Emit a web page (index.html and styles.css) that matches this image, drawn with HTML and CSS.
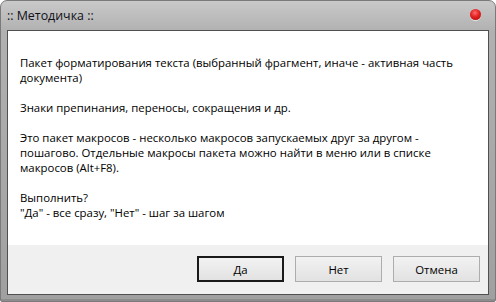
FILE: index.html
```html
<!DOCTYPE html>
<html>
<head>
<meta charset="utf-8">
<link rel="stylesheet" href="styles.css">
</head>
<body>
<div class="window">
  <div class="titlebar">
    <span class="title">:: Методичка ::</span>
    <span class="close"></span>
  </div>
  <div class="client">
    <div class="content">
      <p>Пакет форматирования текста (выбранный фрагмент, иначе - активная часть<br>документа)</p>
      <p>Знаки препинания, переносы, сокращения и др.</p>
      <p>Это пакет макросов - несколько макросов запускаемых друг за другом -<br>пошагово. Отдельные макросы пакета можно найти в меню или в списке<br>макросов (Alt+F8).</p>
      <p>Выполнить?<br>"Да" - все сразу, "Нет" - шаг за шагом</p>
    </div>
    <div class="buttons">
      <button class="btn default">Да</button>
      <button class="btn">Нет</button>
      <button class="btn">Отмена</button>
    </div>
  </div>
</div>
</body>
</html>
```

FILE: styles.css
```css
html, body { margin: 0; padding: 0; background: #fff; }
body { width: 496px; height: 302px; overflow: hidden; font-family: "Open Sans", "Noto Sans", sans-serif; }
.window {
  box-sizing: border-box;
  width: 496px; height: 302px;
  border-radius: 7px 7px 2px 2px;
  border: 1px solid #7a7a7a;
  background: linear-gradient(#c9c9c9 0px, #b1b1b1 30px, #a0a0a0 100%);
  display: flex; flex-direction: column;
  padding: 0 6px 6px 6px;
  box-shadow: inset 0 -2px 0 #8c8c8c;
}
.titlebar {
  height: 29px;
  display: flex; align-items: center; justify-content: space-between;
}
.title { font-size: 12.4px; color: #101018; }
.close {
  width: 11px; height: 11px; border-radius: 50%;
  background: radial-gradient(circle at 45% 35%, #ff6a6a 0, #e22020 45%, #b00808 100%);
  box-shadow: 0 1px 0 rgba(255,255,255,0.6);
  margin-right: 8px; margin-top: -2px;
}
.client {
  flex: 1;
  border: 1px solid #505050;
  background: #f0f0f0;
  display: flex; flex-direction: column;
}
.content {
  background: #fff;
  height: 214px;
  padding: 24px 0 0 12px;
  box-sizing: border-box;
  font-size: 11.4px;
  line-height: 15px;
  color: #000;
}
.content p { margin: 0 0 15px 0; white-space: nowrap; }
.buttons {
  flex: 1;
  display: flex; justify-content: flex-end; align-items: flex-start;
  gap: 11px;
  padding: 11px 8px 0 0;
}
.btn {
  width: 87px; height: 26px;
  font-family: inherit; font-size: 11.4px; color: #000;
  background: linear-gradient(#f2f2f2, #e2e2e2);
  border: 1px solid #adadad;
  border-radius: 0;
  padding: 0;
  margin: 0;
}
.btn.default { border: 2px solid #1a1a1a; }
```
